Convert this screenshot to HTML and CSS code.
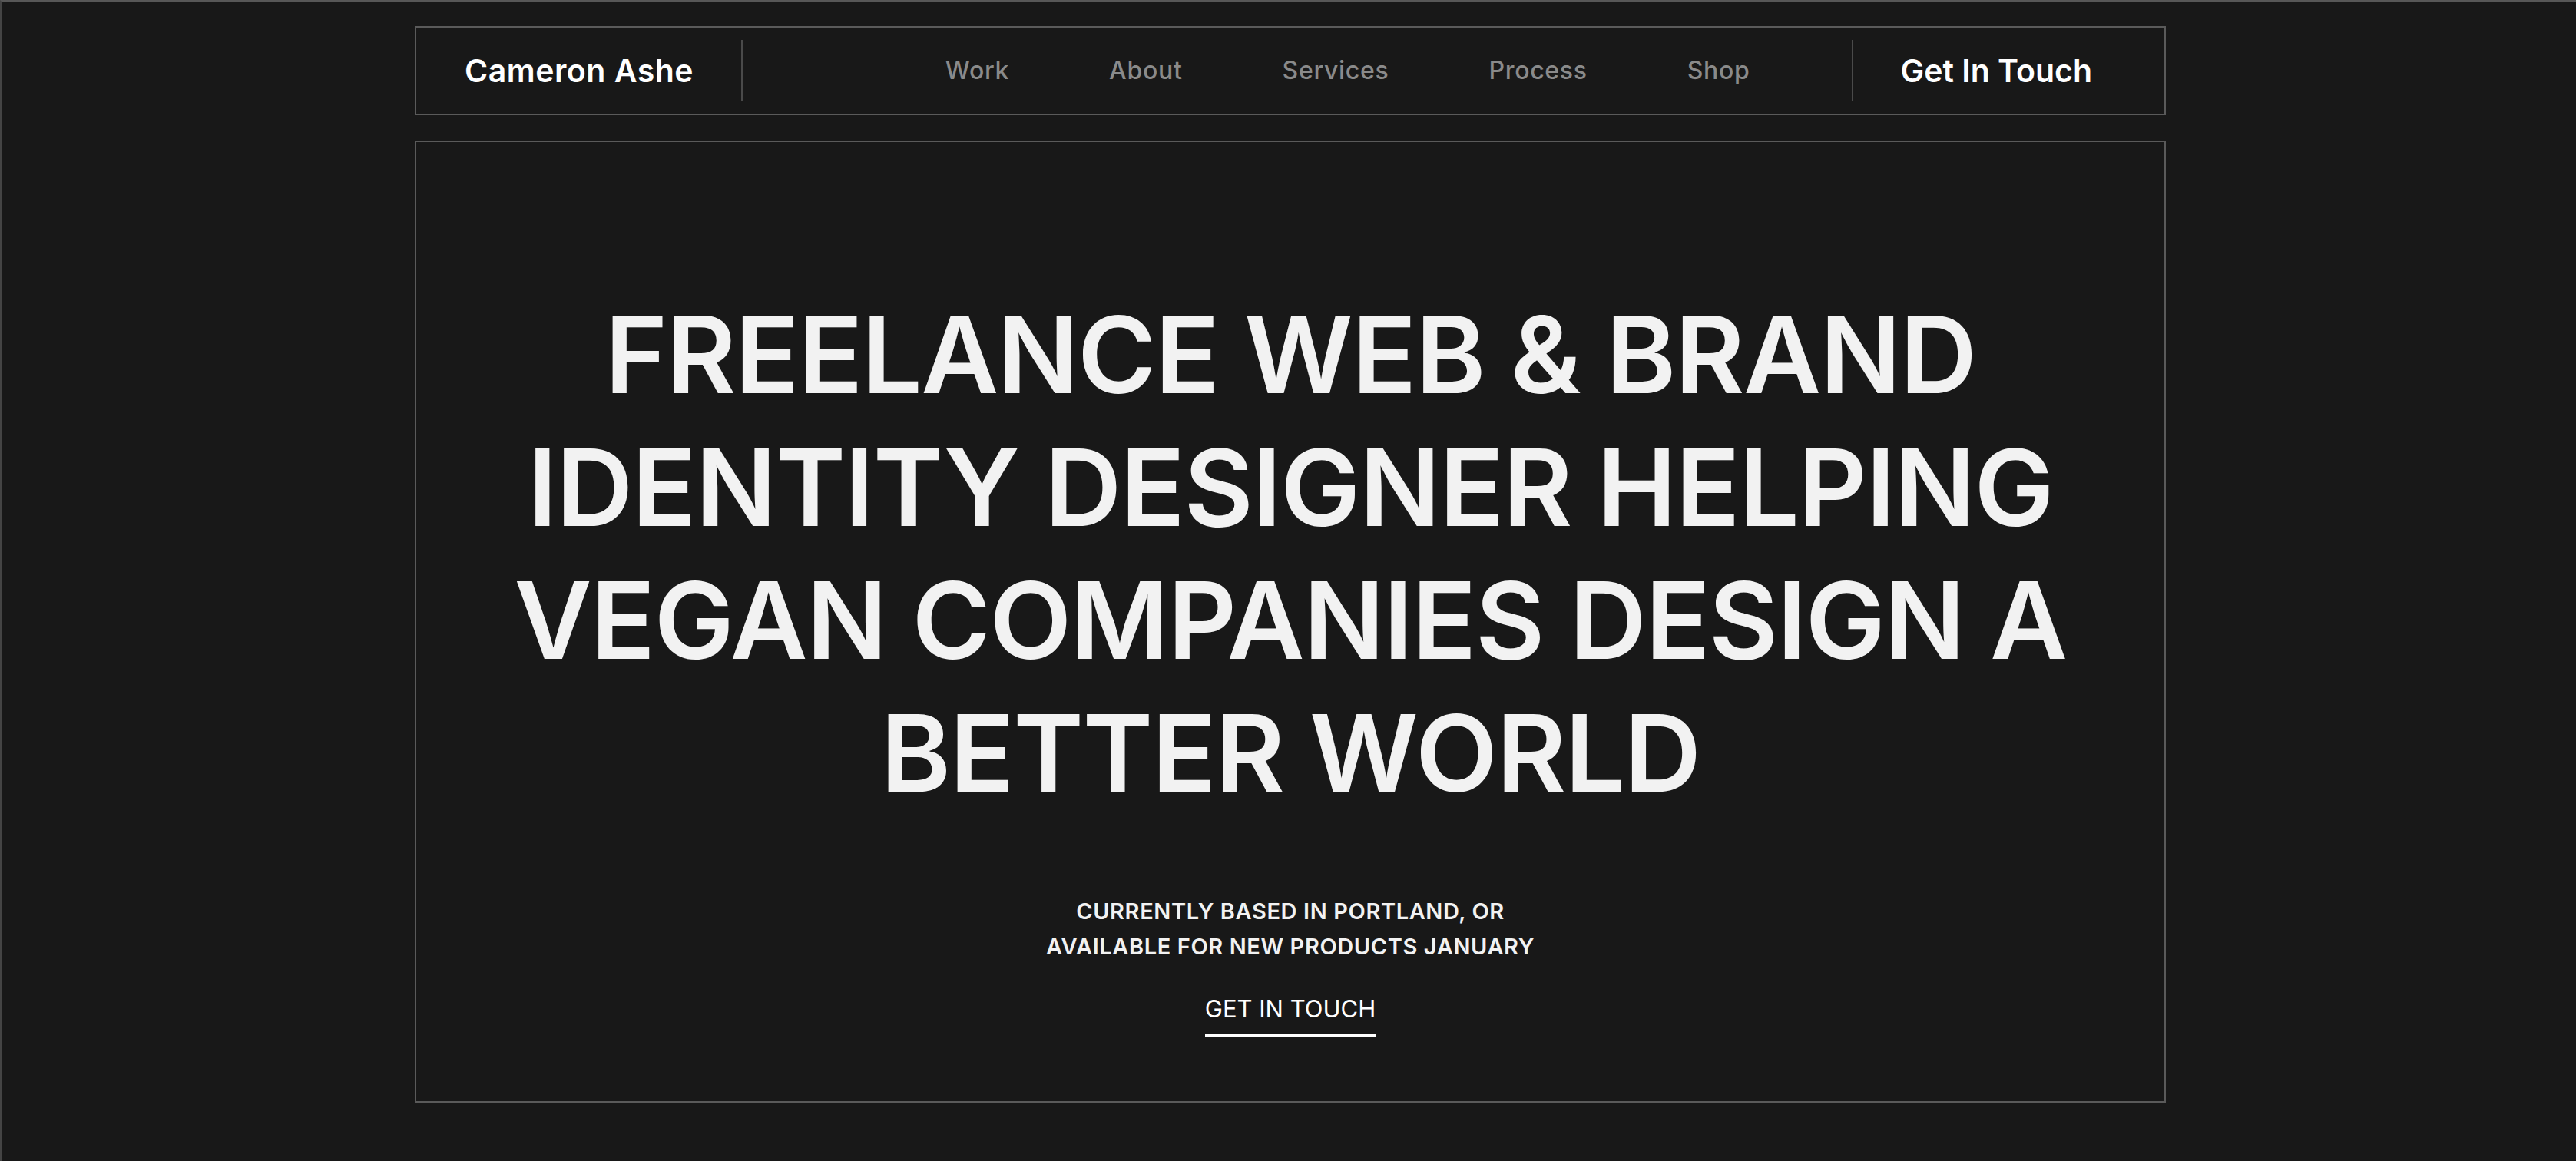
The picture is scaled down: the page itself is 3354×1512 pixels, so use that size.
FILE: index.html
```html
<!DOCTYPE html>
<html lang="en">
<head>
<meta charset="utf-8">
<title>Cameron Ashe</title>
<link rel="stylesheet" href="styles.css">
</head>
<body>
<div class="page">
  <header class="nav">
    <a class="brand" href="#">Cameron Ashe</a>
    <span class="divider"></span>
    <nav class="links">
      <a href="#">Work</a>
      <a href="#">About</a>
      <a href="#">Services</a>
      <a href="#">Process</a>
      <a href="#">Shop</a>
    </nav>
    <span class="divider"></span>
    <a class="cta" href="#">Get In Touch</a>
  </header>
  <main class="hero">
    <h1 class="headline">FREELANCE WEB &amp; BRAND<br>IDENTITY DESIGNER HELPING<br>VEGAN COMPANIES DESIGN A<br>BETTER WORLD</h1>
    <p class="sub">CURRENTLY BASED IN PORTLAND, OR<br>AVAILABLE FOR NEW PRODUCTS JANUARY</p>
    <a class="touch" href="#">GET IN TOUCH</a>
  </main>
</div>
</body>
</html>
```
FILE: styles.css
```css
* { box-sizing: border-box; }
html, body { margin: 0; padding: 0; }
body {
  background: #181818;
  min-height: 100vh;
  padding-left: 4px;
  border-top: 2px solid #575757;
  border-left: 2px solid #444444;
  font-family: "Inter", "Noto Sans", sans-serif;
  color: #f2f2f2;
}
a { text-decoration: none; color: inherit; }
.page {
  width: 2280px;
  margin: 0 auto;
  padding-top: 32px;
}
.nav {
  display: flex;
  align-items: center;
  height: 116px;
  border: 2px solid #5a5a5a;
}
.brand {
  padding: 0 62px 0 63px;
  font-size: 41px;
  font-weight: 600;
  letter-spacing: 0.5px;
  color: #ffffff;
  white-space: nowrap;
}
.divider {
  width: 2px;
  height: 80px;
  background: #4a4a4a;
}
.links {
  margin-left: auto;
  display: flex;
  gap: 130px;
  padding-right: 132px;
  padding-bottom: 2px;
}
.links a {
  font-size: 32px;
  font-weight: 500;
  letter-spacing: 0.7px;
  color: #8a8a8a;
}
.cta {
  padding: 0 94px 0 62px;
  font-size: 41px;
  font-weight: 600;
  color: #ffffff;
  white-space: nowrap;
}
.hero {
  margin-top: 33px;
  border: 2px solid #5a5a5a;
  padding: 190px 0 83px;
  display: flex;
  flex-direction: column;
  align-items: center;
  text-align: center;
}
.headline {
  margin: 0;
  font-size: 139px;
  line-height: 173px;
  font-weight: 600;
  letter-spacing: -1.5px;
  color: #f2f2f2;
  white-space: nowrap;
}
.sub {
  margin: 97px 0 0;
  font-size: 29px;
  line-height: 46px;
  font-weight: 600;
  letter-spacing: 0.6px;
  color: #f2f2f2;
}
.touch {
  margin-top: 39px;
  display: inline-block;
  font-size: 31px;
  line-height: 37px;
  font-weight: 400;
  color: #ffffff;
  padding-bottom: 15px;
  border-bottom: 4px solid #ffffff;
}
```
